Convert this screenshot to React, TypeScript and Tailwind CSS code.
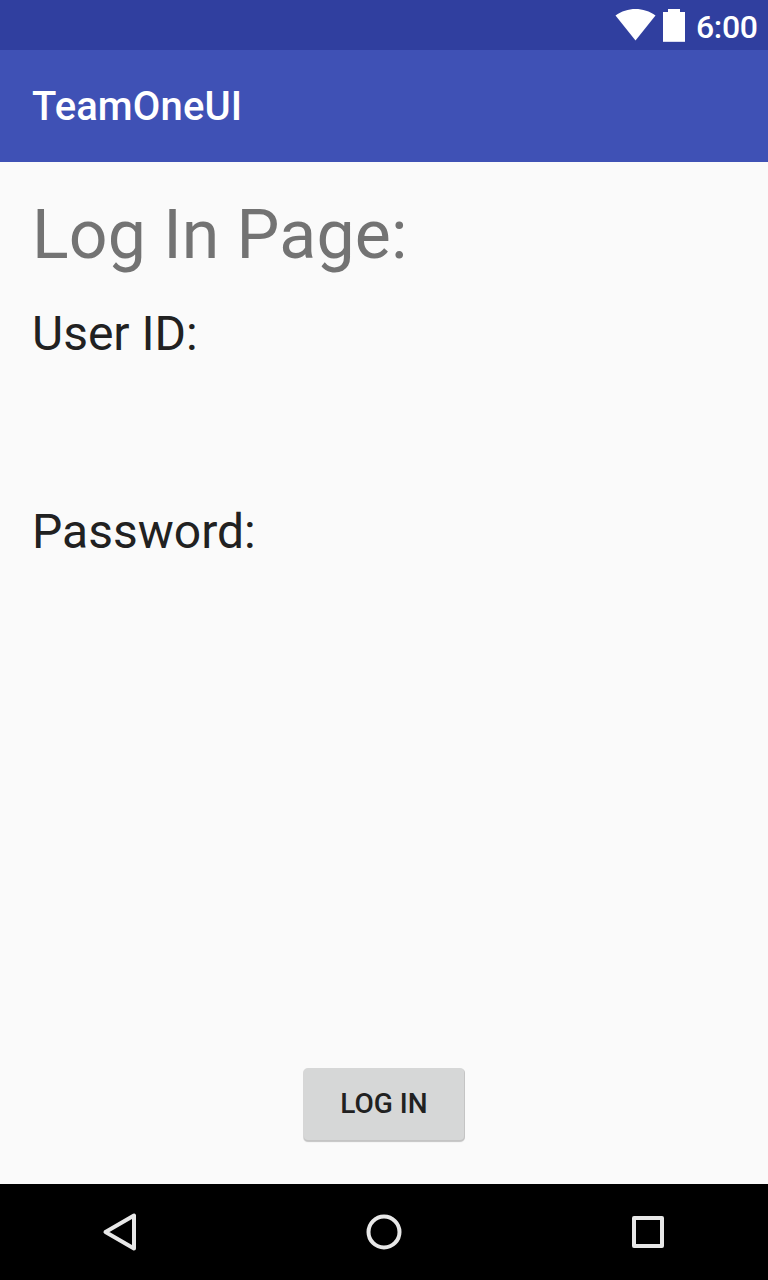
export default function App() {
  return (
    <div className="flex h-[1280px] w-[768px] flex-col overflow-hidden bg-[#fafafa] font-['Roboto',sans-serif]">
      <div className="flex h-[50px] items-center bg-[#303f9f] pl-[615px] text-white">
        <svg className="h-[50px] w-[80px] shrink-0" viewBox="0 0 80 50" fill="#fff">
          <path d="M0.500 15.500C12 6.700 29 6.700 40.500 15.500L20.500 40.500Z" />
          <path d="M53 9H65V12H70V42H48V12H53Z" />
          <path d="M48 41H70V42H48Z" fill="#d9dbee" />
        </svg>
        <span className="pt-[4px] pl-px text-[32px] leading-[38px] font-medium tracking-[-0.35px]">6:00</span>
      </div>
      <header className="flex h-[112px] items-center bg-[#3f51b5] px-8 pt-[2px]">
        <h1 className="text-[40px] leading-[48px] font-medium tracking-[0.12px] text-white">TeamOneUI</h1>
      </header>
      <main className="flex flex-1 flex-col px-8 pt-[33px]">
        <h2 className="text-[68px] leading-[80px] tracking-[0.17px] text-[#737373]">Log In Page:</h2>
        <label className="mt-[31px] text-[48px] leading-[56px] text-[#212121]">User ID:</label>
        <label className="mt-[142px] text-[48px] leading-[56px] text-[#212121]">Password:</label>
        <button className="mt-auto mb-[44px] h-[72px] w-[160px] self-center rounded-[4px] bg-[#d6d7d7] text-[28px] font-medium text-[#212121] shadow-[1px_1px_0_#c4c4c4,0_2px_1px_#c4c4c4,-1px_1px_0_#d9d9d9]">LOG IN</button>
      </main>
      <nav className="flex h-24 items-center justify-between bg-black px-[96px]">
        <svg className="size-12" viewBox="0 0 48 48" fill="none" stroke="#e8e8e8" strokeWidth="4" strokeLinejoin="round"><path d="M38 7.500V40.500L9.500 24Z" /></svg>
        <svg className="size-12" viewBox="0 0 48 48" fill="none" stroke="#e8e8e8" strokeWidth="4"><circle cx="24" cy="24" r="15.500" /></svg>
        <svg className="size-12" viewBox="0 0 48 48" fill="none" stroke="#e8e8e8" strokeWidth="4" strokeLinejoin="round"><rect x="10" y="10" width="28" height="28" /></svg>
      </nav>
    </div>
  );
}
